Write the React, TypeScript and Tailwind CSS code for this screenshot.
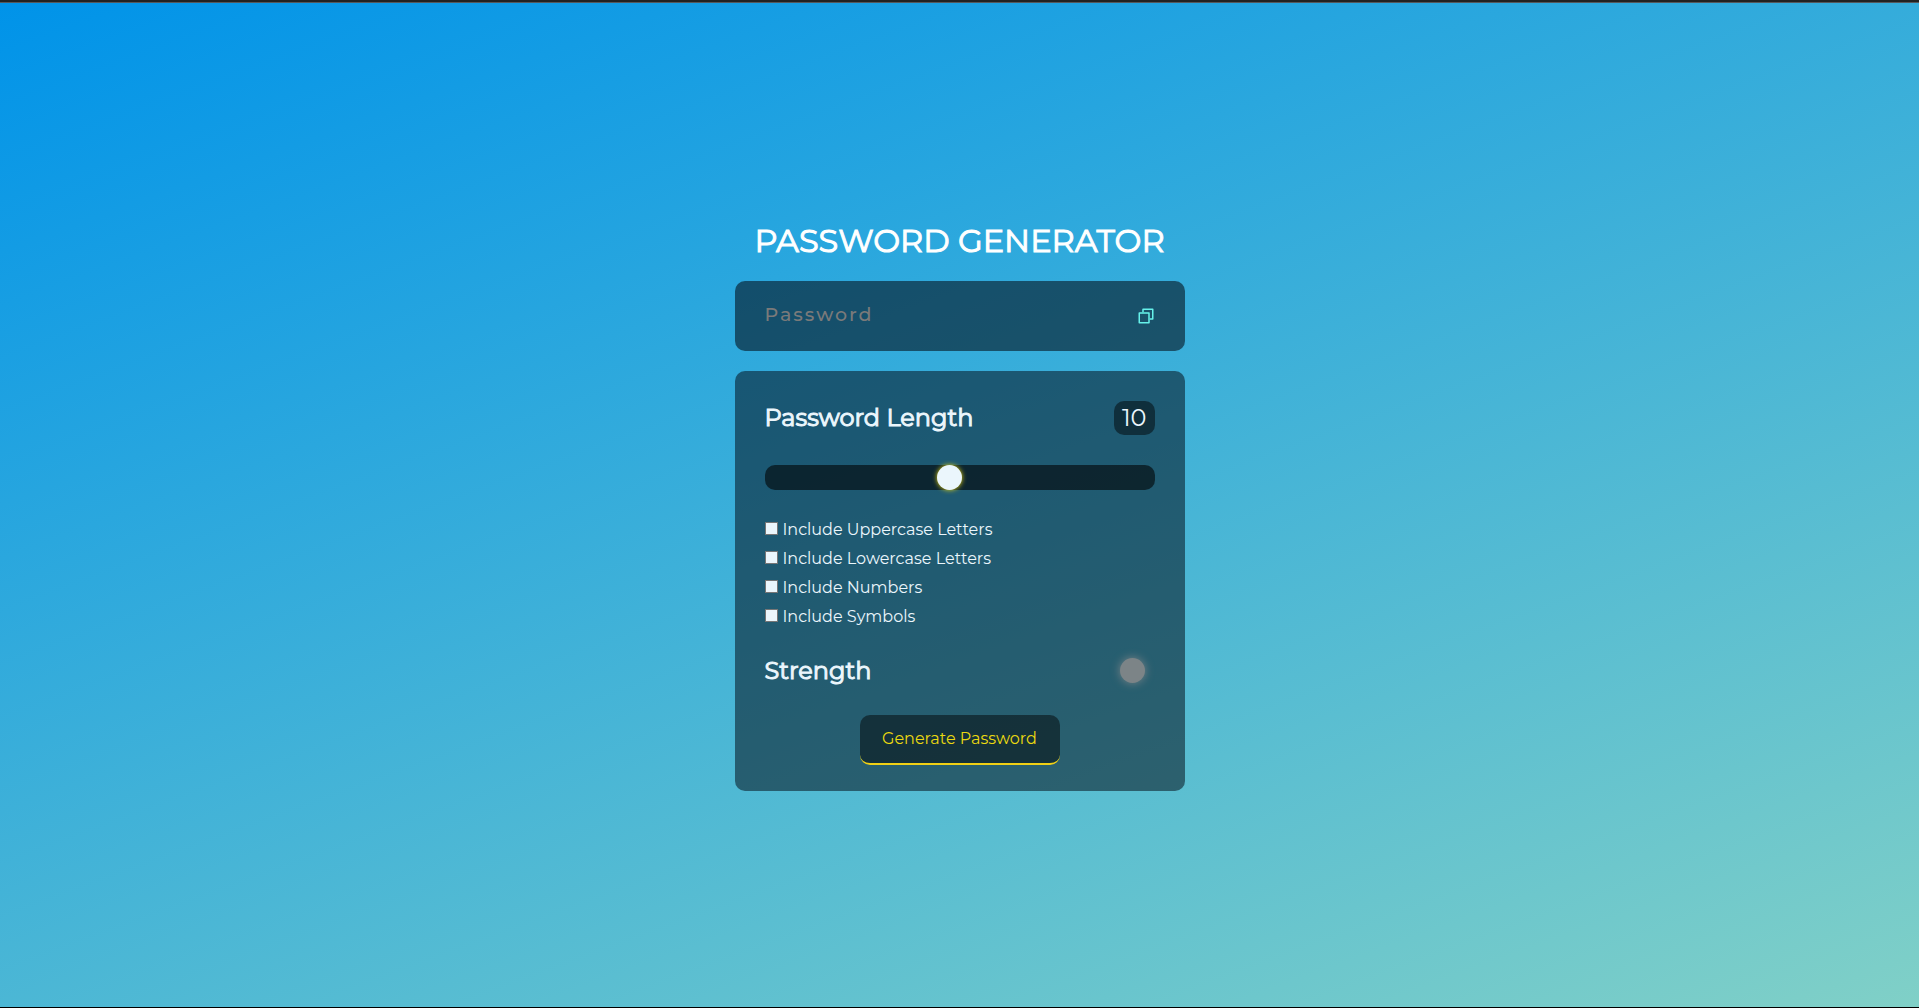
import { useState } from "react";

const options = [
  { id: "uppercase", label: "Include Uppercase Letters" },
  { id: "lowercase", label: "Include Lowercase Letters" },
  { id: "numbers", label: "Include Numbers" },
  { id: "symbols", label: "Include Symbols" },
];

function CopyIcon() {
  return (
    <svg viewBox="0 0 24 24" className="size-[18px]" fill="none" stroke="currentColor" strokeWidth="2" strokeLinejoin="round" aria-hidden="true">
      <rect x="3" y="8" width="13" height="13" />
      <path d="M8 7V3H21V16H17" />
    </svg>
  );
}

export default function App() {
  const [length, setLength] = useState(10);

  return (
    <div className="flex min-h-screen flex-col border-b border-black bg-[linear-gradient(160deg,#0093E9_0%,#80D0C7_100%)] font-['Montserrat','Inter',sans-serif] text-[#ebf6fc]">
      <div className="h-[3px] border-b border-[#55585c] bg-[#222222]" />
      <main className="flex grow flex-col items-center justify-center pb-[3px]">
        <div className="w-full max-w-[450px]">
          <h1 className="mb-4 text-center text-[32px] leading-12 whitespace-nowrap text-white [-webkit-text-stroke:1px_currentColor]">PASSWORD GENERATOR</h1>

          <div className="mb-5 flex h-[70px] items-center justify-between rounded-[10px] bg-[rgb(0_3_12/0.54)] px-[30px]">
            <input
              type="text"
              readOnly
              placeholder="Password"
              aria-label="Password"
              className="min-w-0 grow bg-transparent text-[19px] font-medium tracking-[2px] outline-none placeholder:text-[#7a7a7a]"
            />
            <button type="button" aria-label="Copy password" className="text-[#66f2ea]">
              <CopyIcon />
            </button>
          </div>

          <section className="rounded-[10px] bg-[rgb(0_5_16/0.51)] px-[30px] pt-[30px] pb-[26px]">
            <div className="flex items-center justify-between">
              <label htmlFor="length" className="text-2xl [-webkit-text-stroke:1px_currentColor]">Password Length</label>
              <output htmlFor="length" className="rounded-[10px] bg-black/47 px-2 text-2xl leading-[34px]">{length}</output>
            </div>

            <input
              id="length"
              type="range"
              min={1}
              max={20}
              value={length}
              onChange={(e) => setLength(Number(e.target.value))}
              className="mt-[30px] block h-[25px] w-full cursor-pointer appearance-none rounded-[10px] bg-black/58 [&::-webkit-slider-thumb]:size-[25px] [&::-webkit-slider-thumb]:appearance-none [&::-webkit-slider-thumb]:rounded-full [&::-webkit-slider-thumb]:bg-[#ebf6fc] [&::-webkit-slider-thumb]:shadow-[0_0_5px_#e8d40c]"
            />

            <div className="mt-[25px]">
              {options.map((option) => (
                <div key={option.id} className="flex h-[29px] items-start gap-[5px]">
                  <input
                    id={option.id}
                    type="checkbox"
                    className="mt-[7px] size-[13px] appearance-none border border-[#767676] bg-[#ebf6fc] checked:bg-[#0093E9]"
                  />
                  <label htmlFor={option.id} className="text-base leading-[29px]">{option.label}</label>
                </div>
              ))}
            </div>

            <div className="mt-6 flex items-center justify-between">
              <h2 className="text-2xl [-webkit-text-stroke:1px_currentColor]">Strength</h2>
              <div className="mr-[10px] size-[25px] rounded-full bg-[#7c8487] shadow-[0_0_10px_#7c8487]" />
            </div>

            <button
              type="button"
              className="mx-auto mt-7 block h-[50px] w-[200px] rounded-[10px] border-b-2 border-[#f0d015] bg-black/47 text-base text-[#ebd90f]"
            >
              Generate Password
            </button>
          </section>
        </div>
      </main>
    </div>
  );
}
